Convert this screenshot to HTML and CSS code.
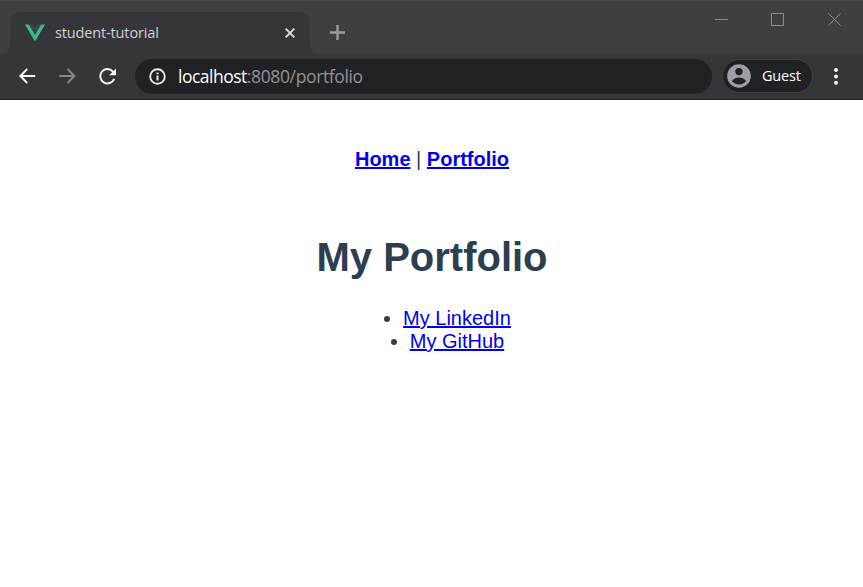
FILE: index.html
```html
<!DOCTYPE html>
<html lang="en">
<head>
<meta charset="utf-8">
<title>student-tutorial</title>
<link rel="stylesheet" href="styles.css">
</head>
<body>
<header class="browser">
  <div class="tabstrip">
    <div class="tab">
      <svg class="logo" width="20" height="18" viewBox="0 0 20 18"><path fill="#41b883" d="M0 .4h4L10 10.7 16 .4h4L10 17.6z"/><path fill="#35495e" d="M4 .4h3.7L10 4.4l2.3-4H16L10 10.7z"/></svg>
      <span class="tab-title">student-tutorial</span>
      <svg class="tab-close" width="10" height="10" viewBox="0 0 10 10"><path d="M.7.7l8.6 8.6M9.3.7L.7 9.3" stroke="#dcdee0" stroke-width="1.9"/></svg>
    </div>
    <svg class="new-tab" width="15" height="15" viewBox="0 0 15 15"><path d="M7.5 0v15M0 7.5h15" stroke="#9a9da0" stroke-width="2.400"/></svg>
    <div class="window-controls">
      <svg width="13" height="13" viewBox="0 0 13 13"><path d="M0 6.5h13"/></svg>
      <svg width="13" height="13" viewBox="0 0 13 13"><path d="M.5.5h12v12H.5z"/></svg>
      <svg width="13" height="13" viewBox="0 0 13 13"><path d="M.3.3l12.4 12.4M12.7.3L.3 12.7"/></svg>
    </div>
  </div>
  <div class="toolbar">
    <svg class="back" width="17" height="16" viewBox="0 0 17 16"><path d="M16.2 8H2M8.2 1L1.4 8l6.8 7"/></svg>
    <svg class="forward" width="17" height="16" viewBox="0 0 17 16"><path d="M.3 8h14.4M8.6 1l6.8 7-6.8 7"/></svg>
    <svg class="reload" width="18" height="17" viewBox="0 0 18 17"><path d="M14.2 3.8A7.2 7.2 0 1 0 15.2 10.8" fill="none" stroke="#f1f3f4" stroke-width="2"/><path fill="#f1f3f4" d="M17 .4v6.900h-6.900z"/></svg>
    <div class="address">
      <svg width="17" height="17" viewBox="0 0 17 17"><circle cx="8.5" cy="8.5" r="7.3" fill="none" stroke="#e8eaed" stroke-width="1.9"/><path d="M8.5 7.4v5M8.5 4.4v1.8" stroke="#e8eaed" stroke-width="2"/></svg>
      <span class="url"><span class="host">localhost</span><span class="path">:8080/portfolio</span></span>
    </div>
    <div class="profile">
      <svg width="24" height="24" viewBox="0 0 24 24"><circle cx="12" cy="12" r="11.8" fill="#9aa0a6"/><circle cx="12" cy="7.6" r="3.7" fill="#202124"/><path fill="#202124" d="M4.9 17c1.8-2.7 4.5-3.6 7.1-3.6s5.3.9 7.1 3.6A9 9 0 0 1 12 20.5 9 9 0 0 1 4.9 17z"/></svg>
      <span class="guest">Guest</span>
    </div>
    <svg class="menu" width="4" height="17" viewBox="0 0 4 17"><g fill="#f1f3f4"><circle cx="2" cy="2" r="2"/><circle cx="2" cy="8.5" r="2"/><circle cx="2" cy="14.8" r="2"/></g></svg>
  </div>
</header>
<main class="page">
  <nav class="nav"><a href="#home">Home</a> | <a href="#portfolio">Portfolio</a></nav>
  <h1>My Portfolio</h1>
  <ul>
    <li><a href="#linkedin">My LinkedIn</a></li>
    <li><a href="#github">My GitHub</a></li>
  </ul>
</main>
</body>
</html>
```

FILE: styles.css
```css
* { box-sizing: border-box; }
body { margin: 0; background: #fff; overflow: hidden; }
svg { display: block; flex: none; }
.browser { height: 100px; background: #35363a; font-family: "Open Sans", "Noto Sans", sans-serif; }
.tabstrip { height: 54px; display: flex; align-items: flex-start; padding-left: 10px; background: #3c4043; border-top: 1px solid #4b4f52; }
.tab { position: relative; width: 300px; height: 42px; margin-top: 11px; display: flex; align-items: center; padding: 0 15px; background: #35363a; border-radius: 10px 10px 0 0; }
.tab::before, .tab::after { content: ""; position: absolute; bottom: 0; width: 10px; height: 10px; }
.tab::before { left: -10px; background: radial-gradient(circle at 0 0, transparent 9.5px, #35363a 10px); }
.tab::after { right: -10px; background: radial-gradient(circle at 100% 0, transparent 9.5px, #35363a 10px); }
.tab-title { margin-left: 10px; font-size: 14.5px; letter-spacing: -0.14px; line-height: 20px; color: #cfd1d3; white-space: nowrap; }
.tab-close { margin-left: auto; }
.new-tab { margin: 24px 0 0 20px; }
.window-controls { display: flex; gap: 43px; margin: 12px 22px 0 auto; }
.window-controls svg:last-child { margin-left: 1px; }
.window-controls path { fill: none; stroke: #8b8e90; stroke-width: 1; }
.toolbar { height: 46px; display: flex; align-items: center; padding: 0 25px 0 19px; border-bottom: 1px solid #242528; }
.back path, .forward path { fill: none; stroke-width: 2; }
.back path { stroke: #f1f3f4; }
.forward path { stroke: #85878a; }
.back, .forward { margin-bottom: 1px; }
.forward { margin-left: 23px; }
.reload { margin-left: 23px; }
.address { width: 577px; height: 35px; margin-left: 18px; display: flex; align-items: center; padding-left: 14px; border-radius: 18px; background: #202124; }
.address svg { margin-bottom: 1px; }
.url { margin: 0 0 2px 12px; font-size: 17.5px; line-height: 24px; white-space: nowrap; }
.host { color: #fff; letter-spacing: -0.5px; }
.path { color: #919395; letter-spacing: -0.37px; }
.profile { width: 91px; height: 34px; margin: 0 0 1px 10px; display: flex; align-items: center; padding-left: 4px; border: 1px solid #3f4145; border-radius: 17px; background: #202124; }
.guest { margin-left: 11px; color: #fff; font-size: 14.5px; line-height: 20px; letter-spacing: -0.2px; }
.menu { margin-left: auto; }
.page { padding-left: 1px; font-family: "Liberation Sans", Arial, sans-serif; font-size: 20px; line-height: 23px; color: #2c3e50; text-align: center; }
.nav { padding-top: 48px; }
.nav a { font-weight: bold; }
h1 { margin: 63px 0 27px; font-size: 40px; line-height: 46px; }
ul { margin: 0; padding-left: 50px; display: flex; flex-direction: column; align-items: center; }
a { color: #0000ee; }
```
